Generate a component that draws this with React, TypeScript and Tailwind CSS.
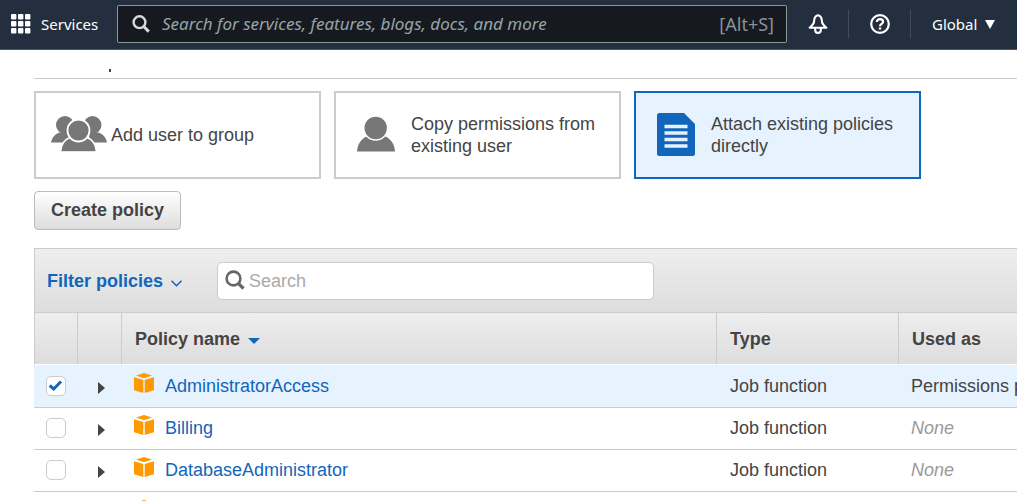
import React from 'react';

type Policy = { name: string; type: string; usedAs: string; checked?: boolean };

const policies: Policy[] = [
  { name: 'AdministratorAccess', type: 'Job function', usedAs: 'Permissions policy', checked: true },
  { name: 'Billing', type: 'Job function', usedAs: '' },
  { name: 'DatabaseAdministrator', type: 'Job function', usedAs: '' },
];

function GridIcon() {
  const cells = [0, 7, 14];
  return (
    <svg width="20" height="20" viewBox="0 0 20 20" fill="#fff" aria-hidden="true">
      {cells.map((y) => cells.map((x) => <rect key={`${x}-${y}`} x={x} y={y} width="5.4" height="5.4" rx="1" />))}
    </svg>
  );
}

function NavSearchIcon() {
  return (
    <svg width="18" height="18" viewBox="0 0 18 18" fill="none" stroke="#d5dbdb" strokeWidth="2.4" aria-hidden="true">
      <circle cx="7.5" cy="7.2" r="5.9" />
      <path d="M11.5 11.3 16.800 16.6" strokeWidth="3" />
    </svg>
  );
}

function BellIcon() {
  return (
    <svg width="20" height="20" viewBox="0 0 20 20" fill="none" stroke="#fff" strokeWidth="2.1" strokeLinejoin="round" aria-hidden="true">
      <path d="M10 1.300C7.300 2 6.200 4 6.200 6.500c0 2.800-1.200 4.500-4.600 7.200h16.800c-3.400-2.700-4.600-4.400-4.600-7.200C13.800 4 12.700 2 10 1.300Z" />
      <path d="M7.200 14v2a2.800 2.900 0 0 0 5.600 0v-2" />
    </svg>
  );
}

function HelpIcon() {
  return (
    <svg width="20" height="20" viewBox="0 0 20 20" fill="none" stroke="#fff" strokeWidth="2.2" aria-hidden="true">
      <circle cx="10" cy="10" r="8.800" />
      <path d="M6.900 8c0-1.900 1.300-2.900 3.100-2.900s3.100 1 3.100 2.600c0 2.100-3.100 2.200-3.100 4.500" />
      <path d="M10 13.400v2.200" strokeWidth="2.400" />
    </svg>
  );
}

function GroupIcon() {
  return (
    <svg width="56" height="36" viewBox="0 0 56 36" fill="#777" aria-hidden="true">
      <circle cx="14" cy="9" r="9" />
      <circle cx="41.500" cy="9" r="9" />
      <path d="M0 26.500C1 21.500 4 18 8.500 16.500h10L17 26.500Z" />
      <path d="M56 26.500c-1-5-4-8.500-8.500-10h-10L39 26.500Z" />
      <path d="M9.500 36c.5-7 4-12.500 9.500-14.500h17C41.500 23.500 45 29 45.500 36Z" stroke="#fff" strokeWidth="1.600" />
      <rect x="8" y="35.800" width="40" height="2" fill="#fff" />
      <circle cx="27.500" cy="14.500" r="11" stroke="#fff" strokeWidth="1.800" />
    </svg>
  );
}

function UserIcon() {
  return (
    <svg width="38" height="36" viewBox="0 0 38 36" fill="#777" aria-hidden="true">
      <path d="M0 35.500C.5 28.500 4 23 9.500 20.500h19C34 23 37.500 28.500 38 35.500Z" />
      <circle cx="18.700" cy="12" r="12" stroke="#fff" strokeWidth="1.600" />
    </svg>
  );
}

function DocIcon() {
  return (
    <svg width="38" height="43" viewBox="0 0 38 43" aria-hidden="true">
      <path d="M2.500 0H27L38 11v29.500a2.500 2.500 0 0 1-2.500 2.500h-33A2.500 2.500 0 0 1 0 40.500v-38A2.500 2.500 0 0 1 2.500 0Z" fill="#1166bb" />
      <path d="M7.500 13.500h23M7.500 20h23M7.500 26.500h23M7.500 33h23" stroke="#e6f2fe" strokeWidth="3.400" />
    </svg>
  );
}

function BoxIcon() {
  return (
    <svg width="20" height="20" viewBox="0 0 20 20" fill="#ff9900" aria-hidden="true" className="block shrink-0">
      <path d="M2 2.600 10 0l8 2.600-8 2.700Z" />
      <path d="M0 4.200 9.300 7v13L0 17.200Z" />
      <path d="M20 4.200 10.700 7v13L20 17.200Z" />
    </svg>
  );
}

function Card({ icon, label, selected }: { icon: React.ReactNode; label: string; selected?: boolean }) {
  return (
    <button
      type="button"
      aria-pressed={!!selected}
      className={`flex h-[88px] items-center border-2 pl-[15px] pr-4 text-left leading-[22px] ${selected ? 'border-[#1166bb] bg-[#e6f2fe]' : 'border-[#ccc] bg-white'}`}
    >
      <span className="flex w-[60px] shrink-0 justify-start pb-[2px]">{icon}</span>
      <span>{label}</span>
    </button>
  );
}

const headCell = 'border-l border-[#ccc] px-[13px] pt-[2px] text-left font-bold';

export default function App() {
  return (
    <div className="h-screen overflow-hidden bg-white font-['Liberation_Sans',Arial,sans-serif] text-[18px] text-[#444]">
      <header className="flex h-[50px] items-center border-b border-[#4b5561] bg-[#232f3e] pb-px font-['Noto_Sans',sans-serif] text-white">
        <button type="button" className="ml-[11px] flex w-[106px] items-center gap-[10px] text-[15px]">
          <GridIcon />
          <span>Services</span>
        </button>
        <div className="flex h-[38px] min-w-0 flex-1 items-center rounded-[2px] border border-[#879b96] bg-[#16191f] pl-[14px] pr-3 text-[#879596]">
          <NavSearchIcon />
          <input
            type="search"
            aria-label="Search services"
            placeholder="Search for services, features, blogs, docs, and more"
            className="ml-3 min-w-0 flex-1 bg-transparent text-[17px] italic outline-none placeholder:text-[#95a5a6]"
          />
          <span className="text-[18px]">[Alt+S]</span>
        </div>
        <button type="button" aria-label="Notifications" className="flex w-[61px] justify-center">
          <BellIcon />
        </button>
        <button type="button" aria-label="Help" className="flex h-7 w-[63px] items-center justify-center border-x border-[#414d5c]">
          <HelpIcon />
        </button>
        <button type="button" className="flex w-[106px] items-center gap-2 pl-[21px] text-[15px]">
          <span>Global</span>
          <svg width="10" height="9" viewBox="0 0 10 9" fill="#fff" aria-hidden="true"><path d="M0 0h10L5 9Z" /></svg>
        </button>
      </header>

      <main className="pl-[34px]">
        <div className="flex h-[29px] items-end border-b border-[#ccc] pb-[6px] pl-[75px]">
          <div className="h-[3px] w-[2px] bg-[#444]" />
        </div>

        <div className="mt-3 grid max-w-[887px] grid-cols-3 gap-[13px]">
          <Card icon={<GroupIcon />} label="Add user to group" />
          <Card icon={<span className="pl-[6px]"><UserIcon /></span>} label="Copy permissions from existing user" />
          <Card selected icon={<span className="pl-[6px]"><DocIcon /></span>} label="Attach existing policies directly" />
        </div>

        <button
          type="button"
          className="mt-3 block h-[39px] rounded-[4px] border border-[#bbb] bg-linear-to-b from-white to-[#ddd] px-4 font-bold"
        >
          Create policy
        </button>

        <section className="mt-[18px]">
          <div className="flex h-[64px] items-center border-l border-t border-[#ccc] bg-linear-to-b from-[#eee] to-[#ddd] pl-3">
            <button type="button" className="flex w-[170px] items-center gap-2 pt-[2px] font-bold text-[#1166bb]">
              Filter policies
              <svg width="11" height="7" viewBox="0 0 11 7" fill="none" stroke="#1166bb" strokeWidth="1.500" className="mt-[3px]" aria-hidden="true"><path d="M.5.7 5.500 5.700 10.500.7" /></svg>
            </button>
            <label className="flex h-[38px] w-[437px] items-center rounded-[5px] border border-[#ccc] bg-white pl-[7px]">
              <svg width="20" height="20" viewBox="0 0 20 20" fill="none" stroke="#666" className="mb-[2px]" aria-hidden="true">
                <circle cx="8.500" cy="8.500" r="6.900" strokeWidth="2.600" />
                <path d="M13.300 13.300 18.500 18.500" strokeWidth="3.200" />
              </svg>
              <input
                type="text"
                aria-label="Search policies"
                placeholder="Search"
                className="ml-1 min-w-0 flex-1 bg-transparent pt-[2px] outline-none placeholder:text-[#aaa]"
              />
            </label>
          </div>

          <table className="w-full table-fixed border-separate border-spacing-0">
            <colgroup>
              <col className="w-[43px]" />
              <col className="w-[44px]" />
              <col />
              <col className="w-[182px]" />
              <col className="w-[119px]" />
            </colgroup>
            <thead>
              <tr className="h-[53px] bg-linear-to-b from-[#eee] to-[#ddd]">
                <th className="border-b border-l border-t border-[#ccc] border-b-white" aria-label="Select" />
                <th className="border-b border-l border-t border-[#ccc] border-b-white" aria-label="Expand" />
                <th className={`${headCell} border-b border-t border-b-white`} aria-sort="descending">
                  <span className="flex items-center gap-2">
                    Policy name
                    <svg width="12" height="6" viewBox="0 0 12 6" fill="#1166bb" className="mt-[3px]" aria-hidden="true"><path d="M0 0h12L6 6Z" /></svg>
                  </span>
                </th>
                <th className={`${headCell} border-b border-t border-b-white`}>Type</th>
                <th className={`${headCell} border-b border-t border-b-white`}>Used as</th>
              </tr>
            </thead>
            <tbody>
              {policies.map((p) => (
                <tr key={p.name} className={p.checked ? 'h-[43px] bg-[#e6f2fe]' : 'h-[42px] bg-white'}>
                  <td className="border-b border-[#ccc] pb-px pl-3">
                    <span className="grid size-5">
                      <input
                        type="checkbox"
                        defaultChecked={p.checked}
                        aria-label={`Select ${p.name}`}
                        className="peer col-start-1 row-start-1 size-5 appearance-none rounded-[5px] border border-[#ccc] bg-white"
                      />
                      <svg width="20" height="20" viewBox="0 0 20 20" fill="none" stroke="#1166bb" strokeWidth="3" className="pointer-events-none invisible col-start-1 row-start-1 peer-checked:visible" aria-hidden="true">
                        <path d="M3.700 9.500 7.700 13 15 5.500" />
                      </svg>
                    </span>
                  </td>
                  <td className="border-b border-[#ccc] pl-[21px]">
                    <button type="button" aria-label={`Expand ${p.name}`} className="block pt-[3px]">
                      <svg width="7" height="12" viewBox="0 0 7 12" fill="#444" aria-hidden="true"><path d="M0 0 7 6 0 12Z" /></svg>
                    </button>
                  </td>
                  <td className="border-b border-[#ccc] pb-px pl-[13px]">
                    <span className="flex items-start gap-[11px] leading-[26px]">
                      <BoxIcon />
                      <a href="#" className="text-[#1166bb]">{p.name}</a>
                    </span>
                  </td>
                  <td className="border-b border-[#ccc] pl-[14px]">{p.type}</td>
                  <td className="overflow-hidden whitespace-nowrap border-b border-[#ccc] pl-[13px]">
                    {p.usedAs || <em className="text-[#999]">None</em>}
                  </td>
                </tr>
              ))}
              <tr className="h-[42px]">
                <td />
                <td />
                <td className="pb-px pl-[13px]"><div className="flex h-[26px] items-start"><BoxIcon /></div></td>
                <td />
                <td />
              </tr>
            </tbody>
          </table>
        </section>
      </main>
    </div>
  );
}
